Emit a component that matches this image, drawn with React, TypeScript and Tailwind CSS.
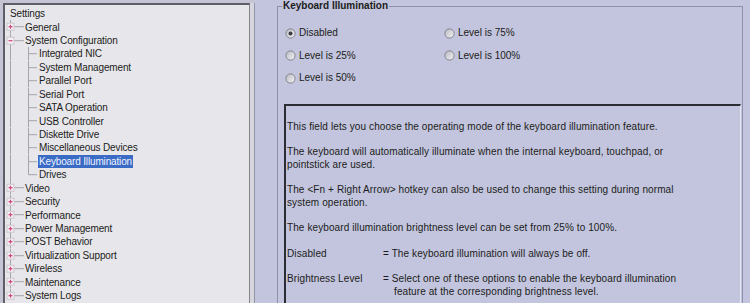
import React from "react";

type Node = { label: string; kind: "root" | "top" | "child"; open?: boolean; last?: boolean; selected?: boolean };

const nodes: Node[] = [
  { label: "Settings", kind: "root" },
  { label: "General", kind: "top" },
  { label: "System Configuration", kind: "top", open: true },
  { label: "Integrated NIC", kind: "child" },
  { label: "System Management", kind: "child" },
  { label: "Parallel Port", kind: "child" },
  { label: "Serial Port", kind: "child" },
  { label: "SATA Operation", kind: "child" },
  { label: "USB Controller", kind: "child" },
  { label: "Diskette Drive", kind: "child" },
  { label: "Miscellaneous Devices", kind: "child" },
  { label: "Keyboard Illumination", kind: "child", selected: true },
  { label: "Drives", kind: "child", last: true },
  { label: "Video", kind: "top" },
  { label: "Security", kind: "top" },
  { label: "Performance", kind: "top" },
  { label: "Power Management", kind: "top" },
  { label: "POST Behavior", kind: "top" },
  { label: "Virtualization Support", kind: "top" },
  { label: "Wireless", kind: "top" },
  { label: "Maintenance", kind: "top" },
  { label: "System Logs", kind: "top", last: true },
];

const LINE = "#a4a4ac";

function Expander({ open }: { open?: boolean }) {
  return (
    <g>
      <rect x="2" y="3.2" width="7" height="7" fill="#f2f0f2" stroke="#cdc6cc" strokeWidth="1" />
      <line x1="3.5" y1="6.7" x2="7.5" y2="6.7" stroke="#d2467a" strokeWidth="1.2" />
      {!open && <line x1="5.5" y1="4.7" x2="5.5" y2="8.7" stroke="#d2467a" strokeWidth="1.2" />}
    </g>
  );
}

function TreeRow({ n }: { n: Node }) {
  if (n.kind === "root") {
    return (
      <div className="flex h-[13.43px] items-center pl-[5px]">
        <span className="leading-[13px]">{n.label}</span>
      </div>
    );
  }
  if (n.kind === "top") {
    return (
      <div className="flex h-[13.43px] items-center">
        <svg width="20" height="13.43" className="shrink-0" viewBox="0 0 20 13.43">
          <line x1="5.5" y1="0" x2="5.5" y2={n.last ? 6.7 : 13.43} stroke={LINE} strokeWidth="1" />
          <line x1="9" y1="6.7" x2="19" y2="6.7" stroke={LINE} strokeWidth="1" />
          <Expander open={n.open} />
        </svg>
        <span className="leading-[13px]">{n.label}</span>
      </div>
    );
  }
  return (
    <div className="flex h-[13.43px] items-center">
      <svg width="33" height="13.43" className="shrink-0" viewBox="0 0 33 13.43">
        <line x1="5.5" y1="0" x2="5.5" y2="13.43" stroke={LINE} strokeWidth="1" />
        <line x1="23.5" y1="0" x2="23.5" y2={n.last ? 6.7 : 13.43} stroke={LINE} strokeWidth="1" />
        <line x1="23.5" y1="6.7" x2="32" y2="6.7" stroke={LINE} strokeWidth="1" />
      </svg>
      {n.selected ? (
        <span className="leading-[13px] bg-[#3a6cc6] text-[#eef2ff] px-[1px]">{n.label}</span>
      ) : (
        <span className="leading-[13px] pl-[1px]">{n.label}</span>
      )}
    </div>
  );
}

function Radio({ checked, label }: { checked?: boolean; label: string }) {
  return (
    <div className="flex h-[22.5px] items-center">
      <svg width="11" height="11" viewBox="0 0 11 11" className="shrink-0">
        <defs>
          <linearGradient id="rg" x1="0" y1="0" x2="1" y2="1">
            <stop offset="0" stopColor="#b8b8c0" />
            <stop offset="1" stopColor="#f4f4f6" />
          </linearGradient>
        </defs>
        <circle cx="5.5" cy="5.5" r="4.6" fill="url(#rg)" stroke="#7a7a86" strokeWidth="0.9" />
        {checked && <circle cx="5.5" cy="5.5" r="2" fill="#3c3c44" />}
      </svg>
      <span className="ml-[3px] leading-[12px]">{label}</span>
    </div>
  );
}

function Para({ children }: { children: React.ReactNode }) {
  return <div className="mb-[13px] leading-[12.5px] whitespace-nowrap">{children}</div>;
}

export default function App() {
  return (
    <div className="w-[750px] h-[303px] overflow-hidden flex bg-[#c2c5dd] font-['Liberation_Sans',Arial,sans-serif] text-[10px] text-[#1c1c20]">
      {/* Left tree */}
      <div className="w-[255px] h-full shrink-0 flex bg-[#c4c4d4] pl-[3px] pt-[3px]">
        <div className="flex-1 bg-[#e7e7eb] border-l-2 border-t-2 border-[#5e5e66] border-r border-r-[#84848c] pt-[2px] tracking-[-0.15px]">
          {nodes.map((n) => (
            <TreeRow key={n.label} n={n} />
          ))}
        </div>
        <div className="w-[5px] bg-[#d6d6dc] border-r border-[#9294a8]" />
      </div>

      {/* Right panel */}
      <div className="flex-1 h-full pl-[22px]">
        <fieldset className="w-[466px] h-[320px] border border-[#8c90a8] pl-[4px]">
          <legend className="px-[1px] font-bold leading-[12px]">Keyboard Illumination</legend>
          <div className="pt-[10px] pl-[3px] grid grid-cols-[159px_1fr]">
            <Radio checked label="Disabled" />
            <Radio label="Level is 75%" />
            <Radio label="Level is 25%" />
            <Radio label="Level is 100%" />
            <Radio label="Level is 50%" />
            <div />
          </div>
          <div className="mt-[14.5px] ml-[2px] w-[457px] h-[220px] border-t-2 border-l-2 border-[#2c2c34] border-r border-b border-r-[#e4e6f0] border-b-[#e4e6f0] pt-[14.5px] pl-[1px] tracking-[0.1px]">
            <Para>This field lets you choose the operating mode of the keyboard illumination feature.</Para>
            <Para>
              The keyboard will automatically illuminate when the internal keyboard, touchpad, or
              <br />
              pointstick are used.
            </Para>
            <Para>
              The &lt;Fn + Right Arrow&gt; hotkey can also be used to change this setting during normal
              <br />
              system operation.
            </Para>
            <Para>The keyboard illumination brightness level can be set from 25% to 100%.</Para>
            <div className="mb-[13px] leading-[12.5px] flex whitespace-nowrap">
              <span className="w-[96px] shrink-0">Disabled</span>
              <span>= The keyboard illumination will always be off.</span>
            </div>
            <div className="mb-[13px] leading-[12.5px] flex whitespace-nowrap">
              <span className="w-[96px] shrink-0">Brightness Level</span>
              <span className="pl-[11px] -indent-[11px]">
                = Select one of these options to enable the keyboard illumination
                <br />
                feature at the corresponding brightness level.
              </span>
            </div>
          </div>
        </fieldset>
      </div>
    </div>
  );
}
